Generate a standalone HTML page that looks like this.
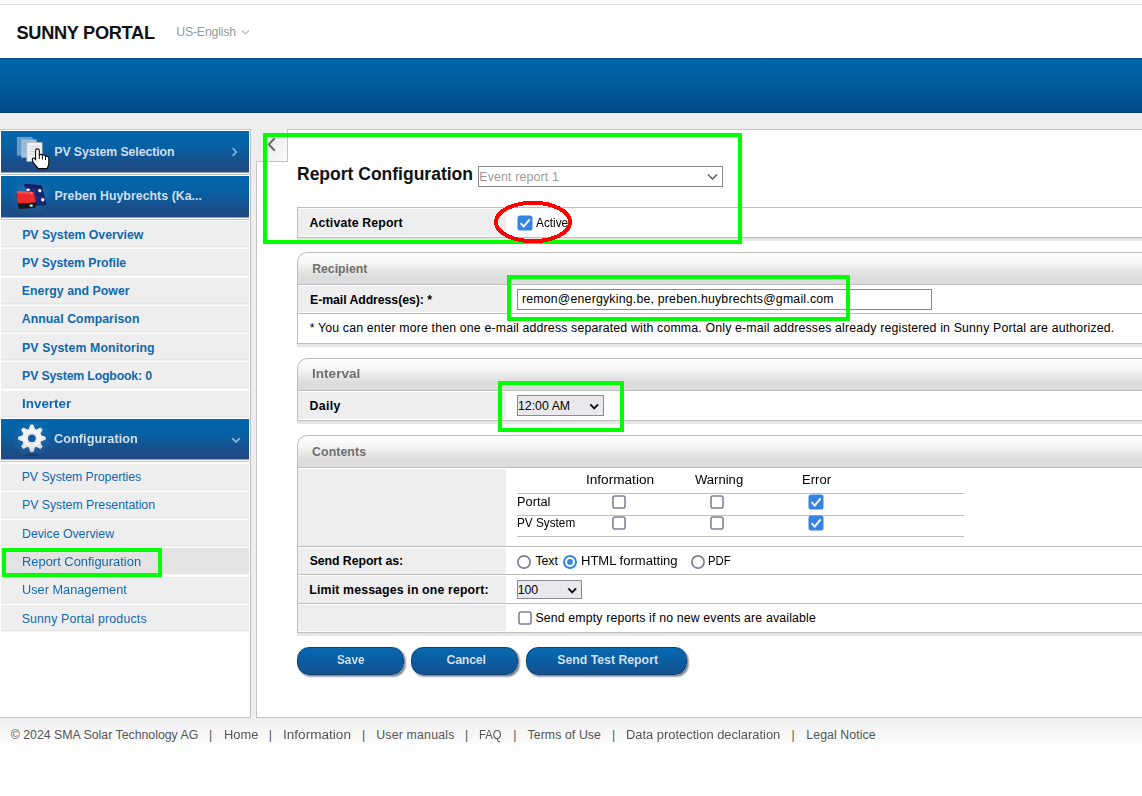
<!DOCTYPE html>
<html><head><meta charset="utf-8">
<style>
*{box-sizing:border-box;margin:0;padding:0}
html,body{width:1142px;height:796px;overflow:hidden;background:#fff;font-family:"Liberation Sans",sans-serif;font-size:12.3px;color:#000}
.abs{position:absolute}
.t{position:absolute;white-space:nowrap;line-height:16px;font-size:12.3px}
#topline{left:0;top:0;width:1142px;height:5px;background:#fbfbfb;border-bottom:1px solid #e2e2e2}
#logo{left:16.5px;top:21.8px;font-size:18.2px;line-height:22px;font-weight:bold;color:#111;white-space:nowrap;letter-spacing:-0.3px}
#banner{left:0;top:58px;width:1142px;height:55px;background:linear-gradient(#0065aa 0%,#0063a7 18%,#00508d 85%,#004b86 100%);border-top:1px solid #01518e;border-bottom:1px solid #023f74}
#grey{left:0;top:113px;width:1142px;height:604px;background:#eeeeee}
#side{left:0;top:129px;width:251px;height:589px;background:#fff;border-top:1px solid #c8c8c8;border-right:1px solid #bdbdbd;border-bottom:1px solid #c4c4c4}
.hd{position:absolute;left:1px;width:248px;height:42px;border-bottom:1px solid #8ba0be;background:linear-gradient(#0466ad 0%,#0661a4 38%,#194f8b 76%,#204a83 100%)}
.sl{position:absolute;left:1px;width:248px;height:1px;background:#c2c2c2}
.mi{position:absolute;left:1px;width:248px;height:27px;background:#eeeeee;border-bottom:1px solid #f3f3f3;box-shadow:inset 0 -1px 0 #e6e6e6}
#main{left:256px;top:129px;width:900px;height:589px;background:#fff;border:1px solid #c4c4c4}
#tab{left:256px;top:129px;width:32px;height:33px;background:linear-gradient(135deg,#eeeeee 0%,#eeeeee 45%,#fbfbfb 100%);border-right:1px solid #c4c4c4;border-bottom:1px solid #c4c4c4}
#tabcover{left:256px;top:129px;width:31px;height:1px;background:#eeeeee}
#tabcover2{left:256px;top:129px;width:1px;height:32px;background:#eeeeee}
.g{position:absolute;border:4px solid #00ff00}
#title{left:297px;top:163px;font-size:17.5px;line-height:22px;font-weight:bold;color:#111;white-space:nowrap}
.sel{position:absolute;background:#fff;border:1px solid #8a8a8a}
.sec{position:absolute;left:297px;width:860px;border:1px solid #bfbfbf;border-bottom:none;border-top-left-radius:10px;height:32px;background:linear-gradient(#fefefe 0%,#f6f6f6 30%,#dcdcdc 78%,#dcdcdc 100%)}
.row{position:absolute;left:297px;width:860px;background:#fff;border:1px solid #bfbfbf;border-bottom:none}
.row.last{border-bottom:1px solid #bfbfbf}
.lab{position:absolute;left:0;top:1px;bottom:1px;width:208px;background:#eeeeee}
.band{position:absolute;left:297px;width:860px;height:3px;background:#e6e6e6}
.cb{position:absolute;width:14px;height:14px;border:1.5px solid #76767e;border-radius:2.5px;background:#fff}
.cb.on{border:none;background:#2b74d9;}
.rd{position:absolute;width:14px;height:14px;border:1.5px solid #76767e;border-radius:50%;background:#fff}
.rd.on{border-color:#2b74d9}
.rd.on::after{content:"";position:absolute;left:2px;top:2px;width:7px;height:7px;border-radius:50%;background:#2b74d9}
.hl{position:absolute;left:517px;width:447px;height:1px;background:#bfbfbf}
.btn{position:absolute;top:647px;height:28px;border-radius:12px;border:1px solid #0b4277;background:linear-gradient(#0769b0 0%,#0b5c9f 55%,#14508e 100%);box-shadow:1.5px 1.5px 2px rgba(20,28,40,0.6)}
#foot{left:0;top:718px;width:1142px;height:78px;background:linear-gradient(#eeeeee 0px,#f5f5f5 12px,#fcfcfc 25px,#ffffff 34px)}
</style></head><body>
<div class="abs" id="topline"></div>
<div class="abs" id="logo">SUNNY PORTAL</div>
<div class="t" style="left:176.24px;top:24px;color:#9a9a9a;letter-spacing:-0.183px">US-English</div>

<svg class="abs" style="left:241px;top:29px" width="9" height="7" viewBox="0 0 9 7"><path d="M1 1.5 L4.5 5 L8 1.5" fill="none" stroke="#b8b8b8" stroke-width="1.2"/></svg>
<div class="abs" id="banner"></div>
<div class="abs" id="grey"></div>

<!-- sidebar -->
<div class="abs" id="side"></div>
<div class="hd" style="top:131px">
<svg class="abs" style="left:229.8px;top:16.4px" width="8" height="10" viewBox="0 0 8 10"><path d="M1.6 1.1 L5.3 5 L1.6 8.9" fill="none" stroke="#86aedb" stroke-width="1.7"/></svg></div>
<div class="sl" style="top:173.6px"></div>
<div class="hd" style="top:176px"></div>
<div class="sl" style="top:219px"></div>
<div class="mi" style="top:221px"></div>
<div class="mi" style="top:249px"></div>
<div class="mi" style="top:278px"></div>
<div class="mi" style="top:306px"></div>
<div class="mi" style="top:334px"></div>
<div class="mi" style="top:362px"></div>
<div class="mi" style="top:391px"></div>
<div class="hd" style="top:419px;height:41px">
<svg class="abs" style="left:230.3px;top:18.3px" width="10" height="7" viewBox="0 0 10 7"><path d="M1.2 1.2 L5 4.9 L8.8 1.2" fill="none" stroke="#86aedb" stroke-width="1.9"/></svg></div>
<div class="sl" style="top:461px"></div>
<div class="mi" style="top:464px"></div>
<div class="mi" style="top:492px"></div>
<div class="mi" style="top:520px"></div>
<div class="mi" style="top:548px;background:#e3e3e3"></div>
<div class="mi" style="top:577px"></div>
<div class="mi" style="top:605px"></div>
<svg class="abs" style="left:10px;top:130px" width="50" height="42" viewBox="10 130 50 42">
<rect x="16.9" y="136.9" width="15.8" height="18.7" fill="#6b9bc7"/>
<path d="M19 141h9M19 143.5h9M19 146h9M19 148.5h9" stroke="#5c8dbb" stroke-width="0.8"/>
<rect x="21.3" y="139.5" width="15.3" height="18.2" fill="#9cbfe0"/>
<path d="M23.5 143.5h9M23.5 146h9M23.5 148.5h9M23.5 151h9" stroke="#86add2" stroke-width="0.8"/>
<rect x="26.9" y="142.5" width="15.2" height="18.8" fill="#f1f1f1" stroke="#b9b9b9" stroke-width="0.7"/>
<path d="M29.5 146.5h10M29.5 149h10M29.5 151.5h10M29.5 154h10" stroke="#cfcfcf" stroke-width="0.9"/>
<path d="M35.6 160 L35.6 150.8 Q35.6 148.9 37.45 148.9 Q39.3 148.9 39.3 150.8 L39.3 154.8 Q40.9 153.9 42.4 155.2 Q44 154.6 45.5 156 Q47.6 155.8 48.8 157.8 L48.8 163 Q48.6 166 47 168.6 L38.3 168.6 Q36 166 33.2 162.3 Q31.6 159.8 33 158.2 Q34.4 157.4 35.6 160 Z" fill="#ffffff" stroke="#0a0a0a" stroke-width="1.1" stroke-linejoin="round"/>
<path d="M39.3 154.8V159M42.4 155.4V159.5M45.5 156.2V160" stroke="#0a0a0a" stroke-width="1" fill="none"/>
</svg>
<svg class="abs" style="left:10px;top:175px" width="50" height="42" viewBox="10 175 50 42">
<defs><radialGradient id="glow2" cx="50%" cy="50%" r="50%"><stop offset="0" stop-color="#3a86c4" stop-opacity="0.6"/><stop offset="1" stop-color="#3a86c4" stop-opacity="0"/></radialGradient>
<filter id="bl" x="-50%" y="-50%" width="200%" height="200%"><feGaussianBlur stdDeviation="0.7"/></filter></defs>
<ellipse cx="31" cy="196" rx="22" ry="19" fill="url(#glow2)"/>
<path d="M23.7 183.7 L41.6 185.3 L46.9 205.3 L34.8 206.1 Z" fill="#17246f"/>
<path d="M26 190.5 L43.2 191.5 M28.5 197.5 L45 198.2 M32 184.5 L39.5 205.8" stroke="#2c3c8e" stroke-width="0.6" fill="none"/>
<path d="M24 184 L41.5 185.6 L42.3 188.3 L24.9 187 Z" fill="#141d5e"/>
<g filter="url(#bl)" fill="#ffffff"><ellipse cx="28.2" cy="189.8" rx="1.8" ry="1.3"/><ellipse cx="39.8" cy="190.6" rx="1.7" ry="1.5" transform="rotate(40 39.8 190.6)"/><ellipse cx="42.7" cy="199.8" rx="1.7" ry="1.6" transform="rotate(40 42.7 199.8)"/></g>
<path d="M17.5 203 L18.8 208.2 Q19 209 20 209 L34.6 207.9 Q35.6 207.8 35.6 206.8 L35.6 201.5 Z" fill="#15191a"/>
<path d="M16.9 192 Q16.9 190.8 18.2 190.8 L32.6 191.7 Q33.7 191.8 33.9 192.9 L35.7 201.6 Q35.8 202.4 35 202.5 L18.8 203.6 Q17.9 203.6 17.8 202.8 Z" fill="#f0292d"/>
<path d="M17.2 192 Q17.3 191 18.4 191 L32.4 191.9 L33 194 L17.6 193.3 Z" fill="#f95a55" opacity="0.8"/>
<rect x="30.8" y="191.8" width="1.3" height="2.6" rx="0.6" fill="#8fa3c8"/>
<rect x="29.6" y="204.6" width="3.2" height="2.2" rx="0.8" fill="#cfeee0"/>
<rect x="16.2" y="193.5" width="1" height="4" fill="#6b2a2a"/>
</svg>
<svg class="abs" style="left:10px;top:418px" width="50" height="42" viewBox="10 418 50 42">
<defs><radialGradient id="gg" cx="50%" cy="40%" r="60%"><stop offset="0" stop-color="#ffffff"/><stop offset="0.6" stop-color="#f2f2f2"/><stop offset="1" stop-color="#d4d4d4"/></radialGradient>
<radialGradient id="glow3" cx="50%" cy="50%" r="50%"><stop offset="0" stop-color="#3a86c4" stop-opacity="0.55"/><stop offset="1" stop-color="#3a86c4" stop-opacity="0"/></radialGradient></defs>
<ellipse cx="32" cy="439" rx="21" ry="19" fill="url(#glow3)"/>
<ellipse cx="32.3" cy="454.8" rx="7.5" ry="1.3" fill="#163a68" opacity="0.8"/>
<path d="M29.39 429.24 L30.73 424.95 L33.07 424.95 L34.41 429.24 L36.53 430.12 L40.51 428.04 L42.16 429.69 L40.08 433.67 L40.96 435.79 L45.25 437.13 L45.25 439.47 L40.96 440.81 L40.08 442.93 L42.16 446.91 L40.51 448.56 L36.53 446.48 L34.41 447.36 L33.07 451.65 L30.73 451.65 L29.39 447.36 L27.27 446.48 L23.29 448.56 L21.64 446.91 L23.72 442.93 L22.84 440.81 L18.55 439.47 L18.55 437.13 L22.84 435.79 L23.72 433.67 L21.64 429.69 L23.29 428.04 L27.27 430.12 Z" fill="url(#gg)" stroke="url(#gg)" stroke-width="1" stroke-linejoin="round" fill-rule="evenodd"/>
<circle cx="31.9" cy="438.3" r="5.2" fill="none" stroke="#dedede" stroke-width="1.1"/>
<circle cx="31.9" cy="438.3" r="3.9" fill="#165c9f"/>
</svg>
<div class="t" style="left:54.27px;top:144px;color:#d0dfef;font-weight:bold;letter-spacing:-0.082px">PV System Selection</div>
<div class="t" style="left:54.48px;top:188px;color:#d0dfef;font-weight:bold;letter-spacing:0.055px">Preben Huybrechts (Ka...</div>
<div class="t" style="left:54.08px;top:431px;color:#d0dfef;font-weight:bold;transform:scaleX(1.04);transform-origin:0 0">Configuration</div>

<div class="t" style="left:22.2px;top:227px;color:#1168b0;font-weight:bold;letter-spacing:-0.035px">PV System Overview</div>
<div class="t" style="left:22.04px;top:255px;color:#1168b0;font-weight:bold;letter-spacing:-0.074px">PV System Profile</div>
<div class="t" style="left:21.8px;top:283px;color:#1168b0;font-weight:bold;letter-spacing:0.036px">Energy and Power</div>
<div class="t" style="left:21.75px;top:311px;color:#1168b0;font-weight:bold;letter-spacing:0.051px">Annual Comparison</div>
<div class="t" style="left:22.0px;top:340px;color:#1168b0;font-weight:bold;letter-spacing:0.111px">PV System Monitoring</div>
<div class="t" style="left:22.11px;top:368px;color:#1168b0;font-weight:bold;letter-spacing:-0.178px">PV System Logbook: 0</div>
<div class="t" style="left:22.22px;top:396px;color:#1168b0;font-weight:bold;transform:scaleX(1.0906);transform-origin:0 0">Inverter</div>

<div class="t" style="left:21.71px;top:469px;color:#1168b0;letter-spacing:-0.038px">PV System Properties</div>
<div class="t" style="left:21.96px;top:497px;color:#1168b0;letter-spacing:-0.01px">PV System Presentation</div>
<div class="t" style="left:22.04px;top:526px;color:#1168b0;letter-spacing:-0.019px">Device Overview</div>
<div class="t" style="left:21.68px;top:554px;color:#1168b0;transform:scaleX(1.0494);transform-origin:0 0">Report Configuration</div>
<div class="t" style="left:21.88px;top:582px;color:#1168b0;transform:scaleX(1.0359);transform-origin:0 0">User Management</div>
<div class="t" style="left:21.65px;top:611px;color:#1168b0;letter-spacing:0.195px">Sunny Portal products</div>

<div class="g" style="left:2px;top:548px;width:160px;height:29px"></div>

<!-- main -->
<div class="abs" id="main"></div>
<div class="abs" id="tab"></div>
<div class="abs" id="tabcover"></div>
<div class="abs" id="tabcover2"></div>
<svg class="abs" style="left:264px;top:134px" width="16" height="22" viewBox="264 134 16 22"><path d="M274.7 138.2 L268.9 144.4 L274.8 150.7" fill="none" stroke="#6c6c6c" stroke-width="2.1" stroke-linejoin="miter" stroke-miterlimit="6"/></svg>

<div class="abs" id="title">Report Configuration</div>
<div class="sel" style="left:478px;top:166px;width:245px;height:21px">
<svg class="abs" style="left:228px;top:6px" width="11" height="8" viewBox="0 0 11 8"><path d="M1 1.5 L5.5 6 L10 1.5" fill="none" stroke="#555" stroke-width="1.4"/></svg></div>
<div class="t" style="left:479.35px;top:169px;color:#9a9a9a;letter-spacing:0.165px">Event report 1</div>


<div class="row last" style="top:207px;height:31px"><div class="lab"></div></div>
<div class="band" style="top:238px"></div>
<div class="t" style="left:309.57px;top:215px;color:#000;font-weight:bold;letter-spacing:0.154px">Activate Report</div>

<svg class="abs" style="left:516.5px;top:215.3px" width="16" height="16" viewBox="0 0 16 16"><rect x="0.5" y="0.5" width="15" height="15" rx="2.5" fill="#3584e4"/><path d="M3.6 8.2 L6.7 11.6 L12.7 4.4" fill="none" stroke="#fff" stroke-width="1.9"/></svg>

<div class="t" style="left:535.62px;top:215px;color:#000;transform:scaleX(0.961);transform-origin:0 0">Active</div>


<div class="sec" style="top:252px"></div>
<div class="row" style="top:284px;height:29px"><div class="lab"></div></div>
<div class="row last" style="top:313px;height:31px"></div>
<div class="band" style="top:344px"></div>
<div class="sel" style="left:517px;top:289px;width:415px;height:21px"></div>
<div class="t" style="left:312.16px;top:261px;color:#6f6f6f;font-weight:bold;letter-spacing:-0.015px">Recipient</div>
<div class="t" style="left:310.01px;top:292px;color:#000;font-weight:bold;letter-spacing:-0.066px">E-mail Address(es): *</div>
<div class="t" style="left:309.68px;top:320px;color:#000;letter-spacing:0.174px">* You can enter more then one e-mail address separated with comma. Only e-mail addresses already registered in Sunny Portal are authorized.</div>
<div class="t" style="left:521.93px;top:291px;color:#000;letter-spacing:0.209px">remon@energyking.be, preben.huybrechts@gmail.com</div>


<div class="sec" style="top:358px"></div>
<div class="row last" style="top:390px;height:31px"><div class="lab"></div></div>
<div class="band" style="top:421px"></div>
<div class="sel" style="left:517px;top:395px;width:87px;height:21px;background:#e9e9ed;border-color:#8a8a96">
<svg class="abs" style="left:70.5px;top:6.5px" width="11" height="8" viewBox="0 0 11 8"><path d="M1.3 1.4 L5.2 5.4 L9.1 1.4" fill="none" stroke="#111" stroke-width="1.9"/></svg></div>
<div class="t" style="left:311.88px;top:366px;color:#6f6f6f;font-weight:bold;transform:scaleX(1.1045);transform-origin:0 0">Interval</div>
<div class="t" style="left:309.49px;top:398px;color:#000;font-weight:bold;letter-spacing:0.363px">Daily</div>
<div class="t" style="left:517.91px;top:398px;color:#000;letter-spacing:0.035px">12:00 AM</div>


<div class="sec" style="top:435px"></div>
<div class="row" style="top:467px;height:80px"><div class="lab" style="bottom:0"></div></div>
<div class="row" style="top:546px;height:29px"><div class="lab" style="bottom:0"></div></div>
<div class="row" style="top:574px;height:30px"><div class="lab" style="bottom:0"></div></div>
<div class="row last" style="top:603px;height:30px"><div class="lab"></div></div>
<div class="band" style="top:633px"></div>
<div class="t" style="left:312.09px;top:444px;color:#6f6f6f;font-weight:bold;letter-spacing:0.089px">Contents</div>
<div class="t" style="left:586.4px;top:472px;color:#000;transform:scaleX(1.1061);transform-origin:0 0">Information</div>
<div class="t" style="left:694.8px;top:472px;color:#000;transform:scaleX(1.0621);transform-origin:0 0">Warning</div>
<div class="t" style="left:802.44px;top:472px;color:#000;transform:scaleX(1.0607);transform-origin:0 0">Error</div>
<div class="t" style="left:517.25px;top:494px;color:#000;transform:scaleX(1.0399);transform-origin:0 0">Portal</div>
<div class="t" style="left:517.04px;top:515px;color:#000;transform:scaleX(0.9573);transform-origin:0 0">PV System</div>
<div class="t" style="left:309.67px;top:553px;color:#000;font-weight:bold;letter-spacing:-0.057px">Send Report as:</div>
<div class="t" style="left:309.37px;top:582px;color:#000;font-weight:bold;letter-spacing:0.152px">Limit messages in one report:</div>

<div class="hl" style="top:493px"></div>
<div class="hl" style="top:515px"></div>
<div class="hl" style="top:536px"></div>
<svg class="abs" style="left:611px;top:494.4px" width="16" height="16" viewBox="0 0 16 16"><rect x="1.95" y="1.95" width="12.1" height="12.1" rx="2" fill="#fff" stroke="#80809a" stroke-width="1.6"/></svg>
<svg class="abs" style="left:709.3px;top:494.4px" width="16" height="16" viewBox="0 0 16 16"><rect x="1.95" y="1.95" width="12.1" height="12.1" rx="2" fill="#fff" stroke="#80809a" stroke-width="1.6"/></svg>
<svg class="abs" style="left:807.5px;top:494.4px" width="16" height="16" viewBox="0 0 16 16"><rect x="0.5" y="0.5" width="15" height="15" rx="2.5" fill="#3584e4"/><path d="M3.6 8.2 L6.7 11.6 L12.7 4.4" fill="none" stroke="#fff" stroke-width="1.9"/></svg>

<svg class="abs" style="left:611px;top:515.4px" width="16" height="16" viewBox="0 0 16 16"><rect x="1.95" y="1.95" width="12.1" height="12.1" rx="2" fill="#fff" stroke="#80809a" stroke-width="1.6"/></svg>
<svg class="abs" style="left:709.3px;top:515.4px" width="16" height="16" viewBox="0 0 16 16"><rect x="1.95" y="1.95" width="12.1" height="12.1" rx="2" fill="#fff" stroke="#80809a" stroke-width="1.6"/></svg>
<svg class="abs" style="left:807.5px;top:515.4px" width="16" height="16" viewBox="0 0 16 16"><rect x="0.5" y="0.5" width="15" height="15" rx="2.5" fill="#3584e4"/><path d="M3.6 8.2 L6.7 11.6 L12.7 4.4" fill="none" stroke="#fff" stroke-width="1.9"/></svg>


<svg class="abs" style="left:516px;top:554px" width="16" height="16" viewBox="0 0 16 16"><circle cx="8" cy="8" r="6.1" fill="#fff" stroke="#80809a" stroke-width="1.7"/></svg>
<svg class="abs" style="left:562px;top:554px" width="16" height="16" viewBox="0 0 16 16"><circle cx="8" cy="8" r="5.95" fill="#fff" stroke="#3584e4" stroke-width="2"/><circle cx="8" cy="8" r="2.9" fill="#3584e4"/></svg>
<svg class="abs" style="left:690px;top:554px" width="16" height="16" viewBox="0 0 16 16"><circle cx="8" cy="8" r="6.1" fill="#fff" stroke="#80809a" stroke-width="1.7"/></svg>

<div class="t" style="left:535.51px;top:553px;color:#000;letter-spacing:-0.077px">Text</div>
<div class="t" style="left:580.8px;top:553px;color:#000;transform:scaleX(1.0598);transform-origin:0 0">HTML formatting</div>
<div class="t" style="left:708.35px;top:553px;color:#000;transform:scaleX(0.9148);transform-origin:0 0">PDF</div>


<div class="sel" style="left:517px;top:580px;width:65px;height:19px;background:#e9e9ed;border-color:#8a8a96">
<svg class="abs" style="left:48.5px;top:5.5px" width="11" height="8" viewBox="0 0 11 8"><path d="M1.3 1.4 L5.2 5.4 L9.1 1.4" fill="none" stroke="#111" stroke-width="1.9"/></svg></div>
<div class="t" style="left:517.78px;top:582px;color:#000;letter-spacing:-0.096px">100</div>

<svg class="abs" style="left:516.5px;top:610.1px" width="16" height="16" viewBox="0 0 16 16"><rect x="1.95" y="1.95" width="12.1" height="12.1" rx="2" fill="#fff" stroke="#80809a" stroke-width="1.6"/></svg>

<div class="t" style="left:535.39px;top:610px;color:#000;letter-spacing:0.159px">Send empty reports if no new events are available</div>


<div class="btn" style="left:297px;width:107px"></div>
<div class="btn" style="left:411px;width:107px"></div>
<div class="btn" style="left:526px;width:161px"></div>
<div class="t" style="left:337.29px;top:652px;color:#d0dfef;font-weight:bold;transform:scaleX(0.9594);transform-origin:0 0">Save</div>
<div class="t" style="left:446.49px;top:652px;color:#d0dfef;font-weight:bold;letter-spacing:-0.194px">Cancel</div>
<div class="t" style="left:557.21px;top:652px;color:#d0dfef;font-weight:bold;letter-spacing:-0.006px">Send Test Report</div>


<!-- overlays -->
<div class="g" style="left:263px;top:133px;width:479px;height:111px"></div>
<div class="g" style="left:507px;top:275px;width:343px;height:46px"></div>
<div class="g" style="left:498px;top:381px;width:126px;height:51px"></div>
<svg class="abs" style="left:490px;top:196px" width="90" height="52" viewBox="490 196 90 52" shape-rendering="crispEdges"><ellipse cx="533" cy="222" rx="37" ry="19.2" fill="none" stroke="#ff0000" stroke-width="4"/></svg>

<!-- footer -->
<div class="abs" id="foot"></div>
<div class="t" style="left:10.79px;top:727px;color:#555555;letter-spacing:0.009px">© 2024 SMA Solar Technology AG</div>
<div class="t" style="left:209.1px;top:727px;color:#555555">|</div>
<div class="t" style="left:223.59px;top:727px;color:#555555;transform:scaleX(1.0476);transform-origin:0 0">Home</div>
<div class="t" style="left:268.7px;top:727px;color:#555555">|</div>
<div class="t" style="left:282.71px;top:727px;color:#555555;transform:scaleX(1.1049);transform-origin:0 0">Information</div>
<div class="t" style="left:362.1px;top:727px;color:#555555">|</div>
<div class="t" style="left:376.22px;top:727px;color:#555555;letter-spacing:0.205px">User manuals</div>
<div class="t" style="left:464.9px;top:727px;color:#555555">|</div>
<div class="t" style="left:479.46px;top:727px;color:#555555;transform:scaleX(0.9153);transform-origin:0 0">FAQ</div>
<div class="t" style="left:513.3px;top:727px;color:#555555">|</div>
<div class="t" style="left:527.53px;top:727px;color:#555555;letter-spacing:0.089px">Terms of Use</div>
<div class="t" style="left:611.9px;top:727px;color:#555555">|</div>
<div class="t" style="left:626.45px;top:727px;color:#555555;transform:scaleX(1.0499);transform-origin:0 0">Data protection declaration</div>
<div class="t" style="left:791.6px;top:727px;color:#555555">|</div>
<div class="t" style="left:806.35px;top:727px;color:#555555;letter-spacing:0.086px">Legal Notice</div>

</body></html>
